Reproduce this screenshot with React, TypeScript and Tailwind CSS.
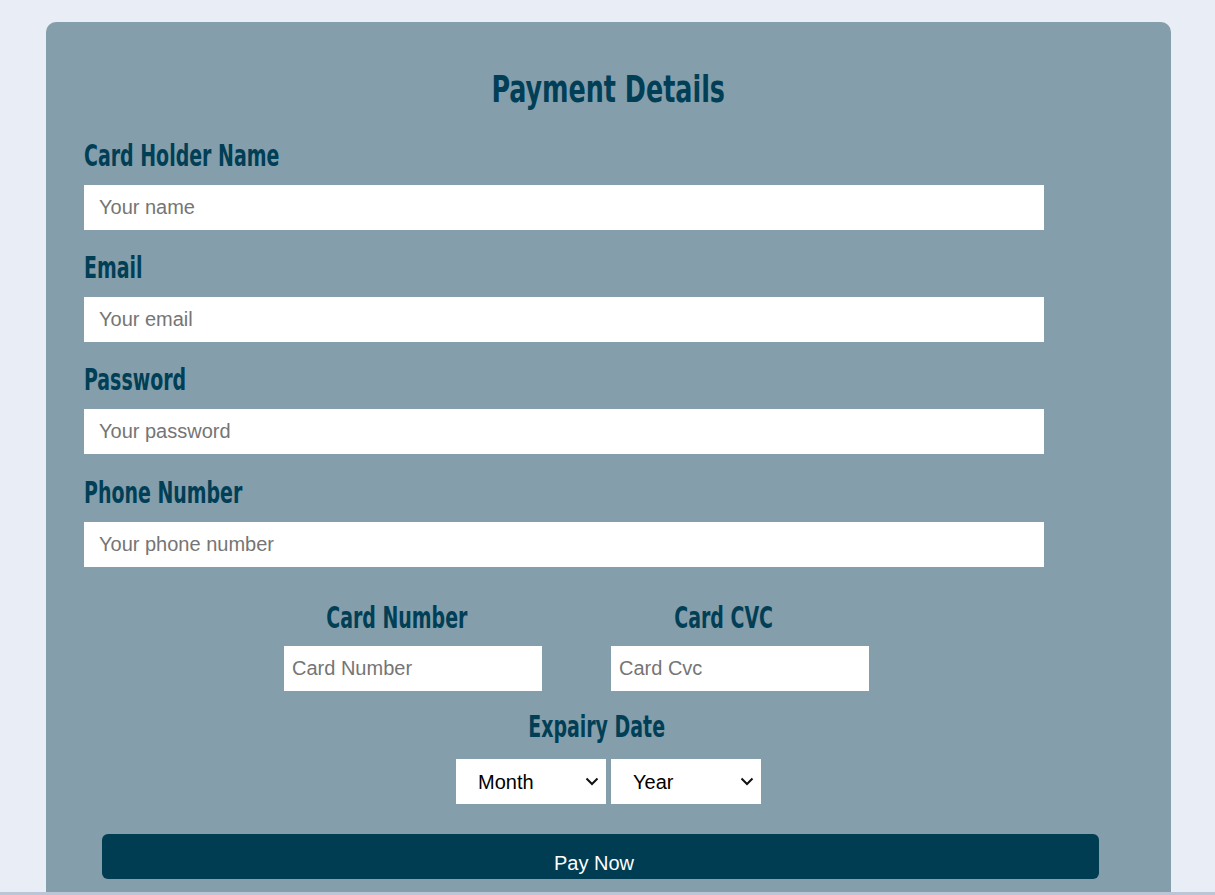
import React from "react";

const headFont = { fontFamily: '"DejaVu Sans Condensed", "DejaVu Sans", sans-serif' } as React.CSSProperties;

function Chevron() {
  return (
    <svg width="14" height="9" viewBox="0 0 14 9" className="pointer-events-none absolute right-[7px] top-[18px]">
      <path d="M1.5 1.5 L7 7 L12.5 1.5" fill="none" stroke="#111" strokeWidth="2" />
    </svg>
  );
}

function Field({ label, placeholder, type = "text", className = "" }: { label: string; placeholder: string; type?: string; className?: string }) {
  return (
    <div className={"flex flex-col " + className}>
      <label className="mb-[15px] whitespace-nowrap text-[31px] font-bold leading-[30px] text-[#003f56]" style={headFont}>
        <span className="inline-block origin-left scale-x-[0.68]">{label}</span>
      </label>
      <input
        type={type}
        placeholder={placeholder}
        className="h-[45px] w-[960px] bg-white pl-[15px] text-[20px] text-black outline-none placeholder:text-[#757575] font-['Liberation_Sans',Arial,sans-serif]"
      />
    </div>
  );
}

function CenterLabel({ text, className }: { text: string; className: string }) {
  return (
    <label className={"whitespace-nowrap text-center text-[31px] font-bold leading-[30px] text-[#003f56] " + className} style={headFont}>
      <span className="inline-block origin-center scale-x-[0.68]">{text}</span>
    </label>
  );
}

export default function App() {
  return (
    <div className="min-h-screen bg-[#e8edf6] pt-[22px] pb-[40px]">
      <div className="ml-[46px] w-[1125px] rounded-[10px] bg-[#859eab] pl-[38px] pt-[47px] pb-[60px]">
        <h1 className="w-[1049px] whitespace-nowrap text-center text-[38px] font-bold leading-[40px] text-[#003f56]" style={headFont}>
          <span className="inline-block origin-center scale-x-[0.743]">Payment Details</span>
        </h1>
        <div className="mt-[31px] flex flex-col gap-[22px]">
          <Field label="Card Holder Name" placeholder="Your name" />
          <Field label="Email" placeholder="Your email" type="email" />
          <Field label="Password" placeholder="Your password" type="password" />
          <Field label="Phone Number" placeholder="Your phone number" className="mt-[1px]" />
        </div>

        <div className="ml-[200px] mt-[35px] flex gap-[69px]">
          <div className="flex w-[258px] flex-col">
            <CenterLabel text="Card Number" className="mb-[14px] pr-[32px]" />
            <input
              placeholder="Card Number"
              className="h-[45px] w-[258px] bg-white pl-[8px] text-[20px] outline-none placeholder:text-[#757575] font-['Liberation_Sans',Arial,sans-serif]"
            />
          </div>
          <div className="flex w-[258px] flex-col">
            <CenterLabel text="Card CVC" className="mb-[14px] pr-[32px]" />
            <input
              placeholder="Card Cvc"
              className="h-[45px] w-[258px] bg-white pl-[8px] text-[20px] outline-none placeholder:text-[#757575] font-['Liberation_Sans',Arial,sans-serif]"
            />
          </div>
        </div>

        <div className="ml-[372px] mt-[20px] flex w-[305px] flex-col">
          <CenterLabel text="Expairy Date" className="mb-[18px] pr-[23px]" />
          <div className="flex gap-[5px]">
            <div className="relative h-[45px] w-[150px] bg-white">
              <select className="h-full w-full appearance-none bg-transparent pl-[22px] text-[20px] text-black outline-none font-['Liberation_Sans',Arial,sans-serif]">
                <option>Month</option>
              </select>
              <Chevron />
            </div>
            <div className="relative h-[45px] w-[150px] bg-white">
              <select className="h-full w-full appearance-none bg-transparent pl-[22px] text-[20px] text-black outline-none font-['Liberation_Sans',Arial,sans-serif]">
                <option>Year</option>
              </select>
              <Chevron />
            </div>
          </div>
        </div>

        <button className="ml-[18px] mt-[30px] flex h-[45px] w-[997px] items-center justify-center rounded-[6px] bg-[#003d52] pt-[12px] pr-[13px] text-[20px] text-white font-['Liberation_Sans',Arial,sans-serif]">
          Pay Now
        </button>
      </div>
      <div className="fixed bottom-0 left-0 h-[3px] w-full bg-[#bcc5d6]" />
    </div>
  );
}
